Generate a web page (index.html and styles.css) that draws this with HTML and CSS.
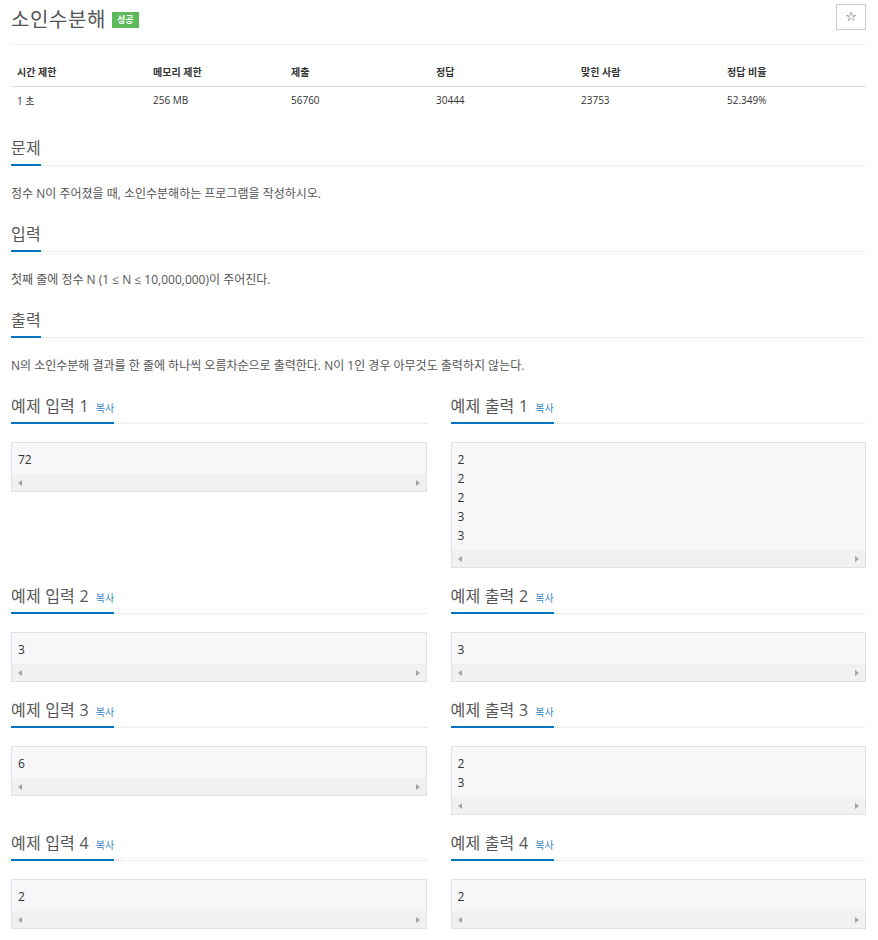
FILE: index.html
```html
<!DOCTYPE html>
<html lang="ko">
<head>
<meta charset="utf-8">
<title>소인수분해</title>
<link rel="stylesheet" href="styles.css">
</head>
<body>
<div class="page">
  <div class="title-row">
    <h1 class="title">소인수분해<span class="badge">성공</span></h1>
    <button class="star" type="button">☆</button>
  </div>

  <table class="info">
    <thead>
      <tr><th>시간 제한</th><th>메모리 제한</th><th>제출</th><th>정답</th><th>맞힌 사람</th><th>정답 비율</th></tr>
    </thead>
    <tbody>
      <tr><td>1 초</td><td>256 MB</td><td>56760</td><td>30444</td><td>23753</td><td>52.349%</td></tr>
    </tbody>
  </table>

  <section class="section">
    <div class="headline"><h2>문제</h2></div>
    <p class="text">정수 N이 주어졌을 때, 소인수분해하는 프로그램을 작성하시오.</p>
  </section>
  <section class="section">
    <div class="headline"><h2>입력</h2></div>
    <p class="text">첫째 줄에 정수 N (1 ≤ N ≤ 10,000,000)이 주어진다.</p>
  </section>
  <section class="section">
    <div class="headline"><h2>출력</h2></div>
    <p class="text">N의 소인수분해 결과를 한 줄에 하나씩 오름차순으로 출력한다. N이 1인 경우 아무것도 출력하지 않는다.</p>
  </section>

  <div class="samples">
    <div class="sample">
      <div class="headline"><h2>예제 입력 1<a class="copy">복사</a></h2></div>
      <div class="box"><pre class="data">72</pre><div class="hscroll"><span class="arr-l"></span><span class="arr-r"></span></div></div>
    </div>
    <div class="sample">
      <div class="headline"><h2>예제 출력 1<a class="copy">복사</a></h2></div>
      <div class="box"><pre class="data">2
2
2
3
3</pre><div class="hscroll"><span class="arr-l"></span><span class="arr-r"></span></div></div>
    </div>
    <div class="sample">
      <div class="headline"><h2>예제 입력 2<a class="copy">복사</a></h2></div>
      <div class="box"><pre class="data">3</pre><div class="hscroll"><span class="arr-l"></span><span class="arr-r"></span></div></div>
    </div>
    <div class="sample">
      <div class="headline"><h2>예제 출력 2<a class="copy">복사</a></h2></div>
      <div class="box"><pre class="data">3</pre><div class="hscroll"><span class="arr-l"></span><span class="arr-r"></span></div></div>
    </div>
    <div class="sample">
      <div class="headline"><h2>예제 입력 3<a class="copy">복사</a></h2></div>
      <div class="box"><pre class="data">6</pre><div class="hscroll"><span class="arr-l"></span><span class="arr-r"></span></div></div>
    </div>
    <div class="sample">
      <div class="headline"><h2>예제 출력 3<a class="copy">복사</a></h2></div>
      <div class="box"><pre class="data">2
3</pre><div class="hscroll"><span class="arr-l"></span><span class="arr-r"></span></div></div>
    </div>
    <div class="sample">
      <div class="headline"><h2>예제 입력 4<a class="copy">복사</a></h2></div>
      <div class="box"><pre class="data">2</pre><div class="hscroll"><span class="arr-l"></span><span class="arr-r"></span></div></div>
    </div>
    <div class="sample">
      <div class="headline"><h2>예제 출력 4<a class="copy">복사</a></h2></div>
      <div class="box"><pre class="data">2</pre><div class="hscroll"><span class="arr-l"></span><span class="arr-r"></span></div></div>
    </div>
  </div>
</div>
</body>
</html>
```

FILE: styles.css
```css
* { box-sizing: border-box; }
html, body { margin: 0; padding: 0; background: #fff; }
body {
  font-family: "Open Sans", "Noto Sans CJK KR", sans-serif;
  color: #555;
}
.page {
  padding: 0 12px 0 11px;
}
.title-row {
  display: flex;
  justify-content: space-between;
  align-items: flex-start;
  height: 45px;
  padding-top: 4px;
  border-bottom: 1px solid #eee;
}
.title {
  margin: 0;
  font-size: 20px;
  line-height: 32px;
  font-weight: 400;
  color: #555;
  letter-spacing: 0.6px;
  display: flex;
  align-items: center;
}
.badge {
  display: inline-block;
  margin-left: 6px;
  background: #5cb85c;
  color: #fff;
  font-size: 9px;
  font-weight: 700;
  line-height: 16px;
  height: 16px;
  padding: 0 5px;
  letter-spacing: 0;
}
.star {
  width: 30px;
  height: 26px;
  margin: 0;
  padding: 0;
  border: 1px solid #ccc;
  background: #fff;
  color: #333;
  font-size: 13px;
  line-height: 24px;
  font-family: "DejaVu Sans", sans-serif;
}
.info {
  width: 100%;
  margin-top: 13px;
  border-collapse: collapse;
  table-layout: fixed;
  color: #333;
}
.info th, .info td {
  text-align: left;
  padding: 0 6px;
  font-size: 10px;
  letter-spacing: 0;
}
.info th {
  height: 28px;
  font-weight: 700;
  border-bottom: 1px solid #ddd;
}
.info td { height: 28px; }
.info th:nth-child(1) { width: 136px; }
.info th:nth-child(2) { width: 138px; }
.info th:nth-child(3) { width: 145px; }
.info th:nth-child(4) { width: 145px; }
.info th:nth-child(5) { width: 146px; }
.info + .section { margin-top: 23px; }
.headline {
  display: flex;
  align-items: flex-end;
  border-bottom: 1px dotted #ddd;
  margin-bottom: 18px;
}
.headline h2 {
  display: block;
  margin: 0 0 -1px;
  padding-bottom: 5px;
  border-bottom: 2px solid #0076c0;
  font-size: 16px;
  line-height: 22px;
  height: 29px;
  font-weight: 400;
  color: #555;
  letter-spacing: 0.2px;
  white-space: nowrap;
}
.text {
  margin: 0 0 19px;
  font-size: 12px;
  line-height: 20px;
  letter-spacing: 0;
}
.copy {
  font-size: 10px;
  line-height: 10px;
  color: #3a87c8;
  letter-spacing: 0;
  margin-left: 7px;
}
.samples {
  display: grid;
  grid-template-columns: 1fr 1fr;
  column-gap: 24px;
}
.box {
  border: 1px solid #e0e0e6;
  background: #f7f7f9;
  margin-bottom: 17px;
}
.data {
  margin: 0;
  padding: 7px 6px 5px;
  font-family: "Open Sans", sans-serif;
  font-size: 12px;
  line-height: 19px;
  color: #333;
}
.hscroll {
  height: 17px;
  background: #f1f1f1;
  display: flex;
  justify-content: space-between;
  align-items: center;
  padding: 0 6px;
}
.arr-l {
  width: 0; height: 0;
  border-top: 3.5px solid transparent;
  border-bottom: 3.5px solid transparent;
  border-right: 4px solid #a3a3a3;
}
.arr-r {
  width: 0; height: 0;
  border-top: 3.5px solid transparent;
  border-bottom: 3.5px solid transparent;
  border-left: 4px solid #a3a3a3;
}
```
